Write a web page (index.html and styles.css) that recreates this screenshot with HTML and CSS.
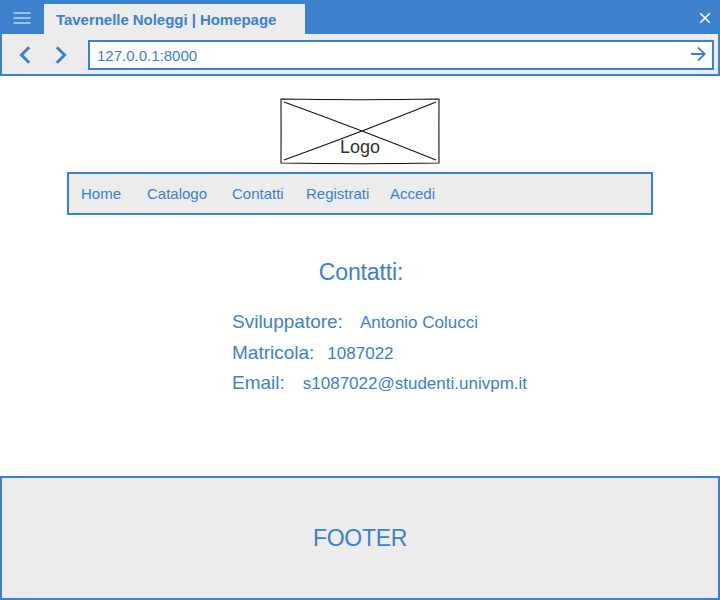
FILE: index.html
```html
<!DOCTYPE html>
<html lang="it">
<head>
<meta charset="utf-8">
<title>Tavernelle Noleggi | Homepage</title>
<link rel="stylesheet" href="styles.css">
</head>
<body>
<header class="browser">
  <div class="tabs">
    <svg class="menu" width="18" height="12" viewBox="0 0 18 12"><path d="M0.5 1H17.5M0.5 6H17.5M0.5 11H17.5"/></svg>
    <div class="tab">Tavernelle Noleggi | Homepage</div>
    <svg class="close" width="12" height="12" viewBox="0 0 12 12"><path d="M1.2 1.2L10.8 10.8M10.8 1.2L1.2 10.8"/></svg>
  </div>
  <div class="toolbar">
    <svg class="arrow" width="12" height="18" viewBox="0 0 12 18"><path d="M10.2 1.2L2.4 9L10.2 16.8"/></svg>
    <svg class="arrow" width="12" height="18" viewBox="0 0 12 18"><path d="M1.8 1.2L9.6 9L1.8 16.8"/></svg>
    <div class="address">
      <span>127.0.0.1:8000</span>
      <svg class="go" width="16" height="16" viewBox="0 0 16 16"><path d="M1 8H14.5M8 1.3L14.7 8L8 14.7"/></svg>
    </div>
  </div>
</header>
<main class="page">
  <svg class="logo" width="160" height="68" viewBox="0 0 160 68">
    <path d="M1 1Q80 2.6 159 1Q158.8 34 159 65Q80 66.6 1 65Q1.2 34 1 1Z"/>
    <path d="M4 4Q84 33 156 62M156 4Q84 33 4 62"/>
    <text x="80" y="55">Logo</text>
  </svg>
  <nav class="nav">
    <a class="home">Home</a>
    <a class="catalogo">Catalogo</a>
    <a class="contatti">Contatti</a>
    <a class="registrati">Registrati</a>
    <a class="accedi">Accedi</a>
  </nav>
  <h1 class="title">Contatti:</h1>
  <dl class="details">
    <div class="row developer"><dt>Sviluppatore:</dt><dd>Antonio Colucci</dd></div>
    <div class="row"><dt>Matricola:</dt><dd>1087022</dd></div>
    <div class="row email"><dt>Email:</dt><dd>s1087022@studenti.univpm.it</dd></div>
  </dl>
</main>
<footer class="footer">FOOTER</footer>
</body>
</html>
```
FILE: styles.css
```css
:root {
  --blue: #3d80cc;
  --gray: #ececec;
}

* {
  box-sizing: border-box;
}

body {
  margin: 0;
  height: 600px;
  display: flex;
  flex-direction: column;
  overflow: hidden;
  background: #fff;
  color: var(--blue);
  font-family: "Liberation Sans", Arial, sans-serif;
  font-size: 15px;
}

svg {
  display: block;
  flex: none;
  fill: none;
}

.browser {
  height: 76px;
  border: 2px solid var(--blue);
  background: var(--gray);
}

.tabs {
  display: flex;
  height: 32px;
  padding: 2px 7px 0 11px;
  background: var(--blue);
}

.menu {
  margin-top: 8px;
  stroke: #9dc0e8;
  stroke-width: 1.8;
}

.tab {
  width: 261px;
  height: 30px;
  margin-left: 13px;
  padding-left: 12px;
  background: var(--gray);
  font-weight: bold;
  letter-spacing: -0.04px;
  line-height: 32px;
  white-space: nowrap;
}

.close {
  margin: 8px 0 0 auto;
  stroke: #fff;
  stroke-width: 1.5;
}

.toolbar {
  display: flex;
  align-items: flex-start;
  padding: 6px 4px 0 17px;
}

.arrow {
  margin: 6px 24px 0 0;
  stroke: var(--blue);
  stroke-width: 3;
}

.address {
  display: flex;
  justify-content: space-between;
  width: 626px;
  height: 30px;
  margin-left: -3px;
  padding: 0 6px 0 7px;
  border: 2px solid var(--blue);
  background: #fff;
  line-height: 28px;
}

.go {
  margin-top: 4px;
  stroke: var(--blue);
  stroke-width: 1.8;
}

.page {
  height: 400px;
  padding-top: 22px;
}

.logo {
  margin: 0 auto;
  stroke: #111;
  stroke-width: 1.1;
}

.logo text {
  fill: #333;
  stroke: none;
  font-size: 18px;
  text-anchor: middle;
}

.nav {
  display: flex;
  width: 586px;
  height: 43px;
  margin: 6px 0 0 67px;
  padding-left: 12px;
  border: 2px solid var(--blue);
  background: var(--gray);
  line-height: 39px;
}

.home {
  width: 66px;
}

.catalogo {
  width: 85px;
}

.contatti {
  width: 74px;
}

.registrati {
  width: 84px;
}

.title {
  margin: 43px 0 0 2px;
  font-size: 23px;
  font-weight: normal;
  letter-spacing: -0.15px;
  line-height: 28px;
  text-align: center;
}

.details {
  margin: 21px 0 0 232px;
}

.row {
  display: flex;
  align-items: baseline;
  gap: 13px;
  height: 30px;
  line-height: 30px;
}

.developer {
  height: 31px;
  gap: 17px;
}

.email {
  gap: 18px;
}

dt {
  font-size: 19px;
}

dd {
  margin: 0;
  font-size: 17px;
}

.footer {
  height: 124px;
  border: 2px solid var(--blue);
  background: var(--gray);
  font-size: 23px;
  letter-spacing: -0.3px;
  line-height: 120px;
  text-align: center;
}
```
